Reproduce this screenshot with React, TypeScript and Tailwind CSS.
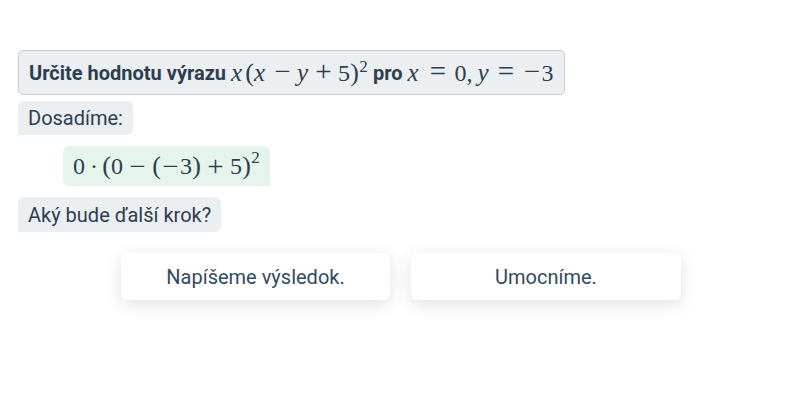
import React from "react";

const serif = { fontFamily: '"Liberation Serif", "DejaVu Serif", serif' };

function X() {
  return <span className="inline-block w-[14px] italic text-[25px] leading-none">x</span>;
}
function Y() {
  return <span className="inline-block w-[12px] italic text-[25px] leading-none">y</span>;
}
function P({ c }: { c: string }) {
  return <span className="inline-block w-[9px] text-center text-[26px] leading-none">{c}</span>;
}
function B({ c }: { c: string }) {
  return <span className="inline-block w-[19px] mx-[5px] text-center text-[29px] leading-none">{c}</span>;
}
function Neg() {
  return <span className="inline-block w-[19px] text-center text-[29px] leading-none">−</span>;
}
function R() {
  return <span className="inline-block w-[19px] mx-[7px] text-center text-[29px] leading-none">=</span>;
}
function Dot() {
  return <span className="inline-block w-[7px] mx-[5px] text-center">·</span>;
}
function Sup() {
  return <span className="inline-block text-[17px] relative top-[-9px] w-[9px] text-center leading-none">2</span>;
}

export default function App() {
  return (
    <div
      className="w-[800px] h-[400px] bg-white text-[#2c3e50] pt-[50px] pl-[18px]"
      style={{ fontFamily: 'Roboto, "Liberation Sans", sans-serif' }}
    >
      <div className="inline-flex items-center h-[45px] px-[10px] bg-[#eceff1] border border-[#c9cdd1] rounded-[5px] text-[20px] font-bold whitespace-nowrap">
        <span>Určite hodnotu výrazu&nbsp;</span>
        <span className="font-normal text-[24px]" style={serif}>
          <X />
          <P c="(" />
          <X />
          <B c="−" />
          <Y />
          <B c="+" />
          5<P c=")" />
          <Sup />
        </span>
        <span>&nbsp;pro&nbsp;</span>
        <span className="font-normal text-[24px]" style={serif}>
          <X />
          <R />0<span className="inline-block w-[11px]">,</span>
          <Y />
          <R />
          <Neg />3
        </span>
      </div>
      <div className="mt-[6px]">
        <div className="inline-flex items-center h-[34px] px-[10px] bg-[#eceff1] rounded-[6px] rounded-bl-none text-[20px]">
          Dosadíme:
        </div>
      </div>
      <div className="mt-[11px] pl-[45px]">
        <div
          className="inline-flex items-center h-[40px] px-[10px] bg-[#e5f5ec] rounded-[6px] rounded-br-none text-[24px] whitespace-nowrap"
          style={serif}
        >
          0<Dot />
          <P c="(" />0<B c="−" />
          <P c="(" />
          <Neg />3<P c=")" />
          <B c="+" />5<P c=")" />
          <Sup />
        </div>
      </div>
      <div className="mt-[11px]">
        <div className="inline-flex items-center h-[35px] px-[10px] bg-[#eceff1] rounded-[6px] rounded-bl-none text-[20px]">
          Aký bude ďalší krok?
        </div>
      </div>
      <div className="mt-[21px] flex gap-[21px] pl-[103px]">
        <button className="w-[269px] h-[47px] bg-white rounded-[6px] text-[20px] text-[#34495e] shadow-[0_4px_18px_rgba(0,0,0,0.12)]">
          Napíšeme výsledok.
        </button>
        <button className="w-[270px] h-[47px] bg-white rounded-[6px] text-[20px] text-[#34495e] shadow-[0_4px_18px_rgba(0,0,0,0.12)]">
          Umocníme.
        </button>
      </div>
    </div>
  );
}
